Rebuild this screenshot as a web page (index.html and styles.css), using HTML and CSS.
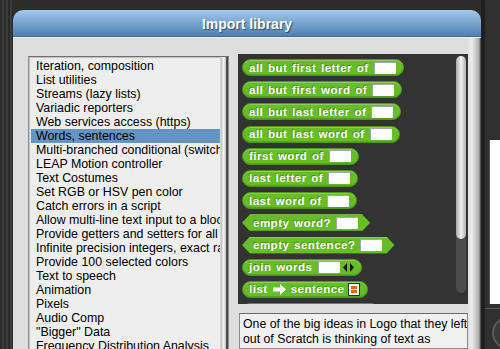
FILE: index.html
```html
<!DOCTYPE html>
<html>
<head>
    <title>Import library</title>
<link rel="stylesheet" href="styles.css">
</head>
<body>
    <div class="desk"></div>

    <div class="dialog">
        <div class="title">Import library</div>

        <div class="dialog-body">
            <div class="libs">
                <ul class="lib-list">
                    <li>Iteration, composition</li>
                    <li>List utilities</li>
                    <li>Streams (lazy lists)</li>
                    <li>Variadic reporters</li>
                    <li>Web services access (https)</li>
                    <li class="sel">Words, sentences</li>
                    <li>Multi-branched conditional (switch)</li>
                    <li>LEAP Motion controller</li>
                    <li>Text Costumes</li>
                    <li>Set RGB or HSV pen color</li>
                    <li>Catch errors in a script</li>
                    <li>Allow multi-line text input to a block</li>
                    <li>Provide getters and setters for all GUI-controlled global attributes</li>
                    <li>Infinite precision integers, exact rationals, complex</li>
                    <li>Provide 100 selected colors</li>
                    <li>Text to speech</li>
                    <li>Animation</li>
                    <li>Pixels</li>
                    <li>Audio Comp</li>
                    <li>"Bigger" Data</li>
                    <li>Frequency Distribution Analysis</li>
                </ul>
                <div class="lib-scroll"><div class="lib-thumb"></div></div>
            </div>

            <div class="detail">
                <div class="palette">
                    <div class="block"><span class="label">all but first letter of</span><span class="slot"></span></div>
                    <div class="block"><span class="label">all but first word of</span><span class="slot"></span></div>
                    <div class="block"><span class="label">all but last letter of</span><span class="slot"></span></div>
                    <div class="block"><span class="label">all but last word of</span><span class="slot"></span></div>
                    <div class="block"><span class="label">first word of</span><span class="slot"></span></div>
                    <div class="block"><span class="label">last letter of</span><span class="slot"></span></div>
                    <div class="block"><span class="label">last word of</span><span class="slot"></span></div>
                    <div class="block pred"><span class="label">empty word?</span><span class="slot"></span></div>
                    <div class="block pred"><span class="label">empty sentence?</span><span class="slot"></span></div>
                    <div class="block"><span class="label">join words</span><span class="slot"></span>
                        <svg class="arrows" width="11" height="9" viewBox="0 0 11 9"><path d="M4 0 L0 4.5 L4 9 Z M7 0 L11 4.5 L7 9 Z" fill="#111"/></svg>
                    </div>
                    <div class="block"><span class="label">list</span>
                        <svg width="13" height="11" viewBox="0 0 13 11"><path d="M0 3.5 H7 V0 L13 5.5 L7 11 V7.5 H0 Z" fill="#fff"/></svg>
                        <span class="label">sentence</span>
                        <svg class="list-icon" width="12" height="13" viewBox="0 0 12 13"><rect x="0.5" y="0.5" width="11" height="12" fill="#fff" stroke="#333"/><rect x="3" y="3" width="6" height="3" fill="#e8661a"/><rect x="3" y="7" width="6" height="3" fill="#e8661a"/></svg>
                    </div>
                    <div class="block"><span class="label">sentence</span>
                        <svg width="13" height="11" viewBox="0 0 13 11"><path d="M0 3.5 H7 V0 L13 5.5 L7 11 V7.5 H0 Z" fill="#fff"/></svg>
                        <span class="label">list</span><span class="slot"></span>
                    </div>

                    <div class="vscroll"><div class="vthumb"></div></div>
                </div>

                <div class="notes">
                    One of the big ideas in Logo that they left<br>
                    out of Scratch is thinking of text as<br>
                    structured into words and sentences, rather<br>
                    than just a string of characters.
                </div>
            </div>
        </div>
    </div>

    <div class="side">
        <div class="stage"></div>
        <div class="corral"><div class="knob"></div></div>
    </div>
</body>
</html>
```

FILE: styles.css
```css
body {
    font-family: "Liberation Sans", Arial, sans-serif;
    margin: 0;
    padding: 0;
    height: 349px;
    overflow: hidden;
    display: flex;
    background-color: #2c2c2c;
}

.desk {
    width: 13px;
    flex: none;
    background: repeating-linear-gradient(90deg, #2b2b2b 0 2px, #3b3b3b 2px 4px);
}

/* dialog */

.dialog {
    width: 468px;
    flex: none;
    margin-top: 10px;
    display: flex;
    flex-direction: column;
}

.title {
    height: 27px;
    line-height: 28px;
    text-align: center;
    color: #fff;
    font-size: 14px;
    font-weight: bold;
    text-shadow: 1px 1px 1px rgba(0, 0, 0, 0.5);
    border-radius: 10px 10px 0 0;
    background: linear-gradient(#a4c9ec, #7fabd6 40%, #4f80af);
    border-bottom: 1px solid #3f6b96;
    box-sizing: border-box;
}

.dialog-body {
    flex: 1;
    min-height: 0;
    display: flex;
    gap: 9px;
    padding: 16px 0 0 15px;
    background: linear-gradient(90deg, #dedede 0, #dedede calc(100% - 14px), #ececec calc(100% - 9px), #a9a9a9 calc(100% - 2px), #3a3a3a 100%);
    border-top: 1px solid #efefef;
}

/* library list */

.libs {
    width: 201px;
    height: 320px;
    margin-top: 2px;
    display: flex;
    box-sizing: border-box;
    border: 1px solid #8e8e8e;
    border-top-color: #6f6f6f;
    background-color: #eeeeee;
    box-shadow: inset 1px 1px 1px rgba(0, 0, 0, 0.2);
}

.lib-list {
    list-style: none;
    margin: 0;
    padding: 2px 0 0 2px;
    width: 189px;
    overflow: hidden;
    font-size: 12.4px;
    line-height: 14px;
    color: #000;
}

.lib-list li {
    height: 14px;
    padding-left: 5px;
    white-space: nowrap;
    overflow: hidden;
}

.lib-list li.sel {
    background-color: #6494c4;
}

.lib-scroll {
    width: 8px;
    flex: none;
    box-sizing: border-box;
    border-right: 2px solid #4a4a4a;
    background-color: #d6d6d6;
}

.lib-thumb {
    height: 100%;
    margin: 0 0 0 1px;
    border-radius: 4px 4px 0 0;
    background: linear-gradient(90deg, #bdbdbd, #f4f4f4 50%, #c4c4c4);
}

/* palette and notes */

.detail {
    width: 230px;
    display: flex;
    flex-direction: column;
    gap: 9px;
}

.palette {
    position: relative;
    height: 250px;
    flex: none;
    box-sizing: border-box;
    padding: 5px 0 0 4px;
    background-color: #333333;
    display: flex;
    flex-direction: column;
    align-items: flex-start;
    gap: 5.2px;
    overflow: hidden;
}

.block {
    display: inline-flex;
    align-items: center;
    gap: 5px;
    height: 17px;
    flex: none;
    box-sizing: border-box;
    padding: 0 7px 0 6px;
    border-radius: 9px;
    border: 1px solid #4c9a18;
    background-color: #66be26;
    box-shadow: inset 0 1px 0 rgba(255, 255, 255, 0.25), inset 0 -1px 0 rgba(0, 0, 0, 0.15);
    color: #fff;
    font-size: 11.5px;
    font-weight: bold;
    white-space: nowrap;
}

.block .label {
    letter-spacing: 0.5px;
    word-spacing: 1px;
    text-shadow: -1px -1px 0 rgba(0, 0, 0, 0.25);
}

.block.pred {
    border: none;
    border-radius: 0;
    padding: 0 12px 0 11px;
    clip-path: polygon(0 50%, 8px 0, calc(100% - 8px) 0, 100% 50%, calc(100% - 8px) 100%, 8px 100%);
}

.slot {
    width: 22px;
    height: 12px;
    background-color: #fff;
    border-radius: 1px;
    box-shadow: inset 1px 1px 0 rgba(0, 0, 0, 0.35);
}

.arrows {
    margin-left: -2px;
}

.list-icon {
    margin-left: -1px;
}

.vscroll {
    position: absolute;
    top: 2px;
    right: 2px;
    width: 10px;
    height: 237px;
    border-radius: 5px;
    background-color: #4c4c4c;
}

.vthumb {
    height: 183px;
    border-radius: 5px;
    background: linear-gradient(90deg, #a8a8a8, #f2f2f2 50%, #b0b0b0);
}

.notes {
    flex: 1;
    width: 229px;
    margin-left: 1px;
    box-sizing: border-box;
    padding: 3px 0 0 3px;
    border: 1px solid #8a8a8a;
    border-top-color: #6a6a6a;
    background-color: #f0f0f0;
    font-size: 12.3px;
    line-height: 15px;
    color: #000;
    white-space: nowrap;
    overflow: hidden;
}

/* ide behind the dialog */

.side {
    width: 19px;
    flex: none;
    box-sizing: border-box;
    border-left: 4px solid #1f1f1f;
    background-color: #303030;
    display: flex;
    flex-direction: column;
}

.stage {
    height: 164px;
    margin: 140px 0 0 4px;
    background-color: #fff;
    border-left: 1px solid #555;
}

.corral {
    flex: 1;
    margin-top: 4px;
    border-top: 1px solid #555;
    padding: 8px 0 0 7px;
    overflow: hidden;
}

.knob {
    width: 28px;
    height: 28px;
    border-radius: 50%;
    border: 2px solid #5a5a5a;
    background-color: #3a3a3a;
}
```
